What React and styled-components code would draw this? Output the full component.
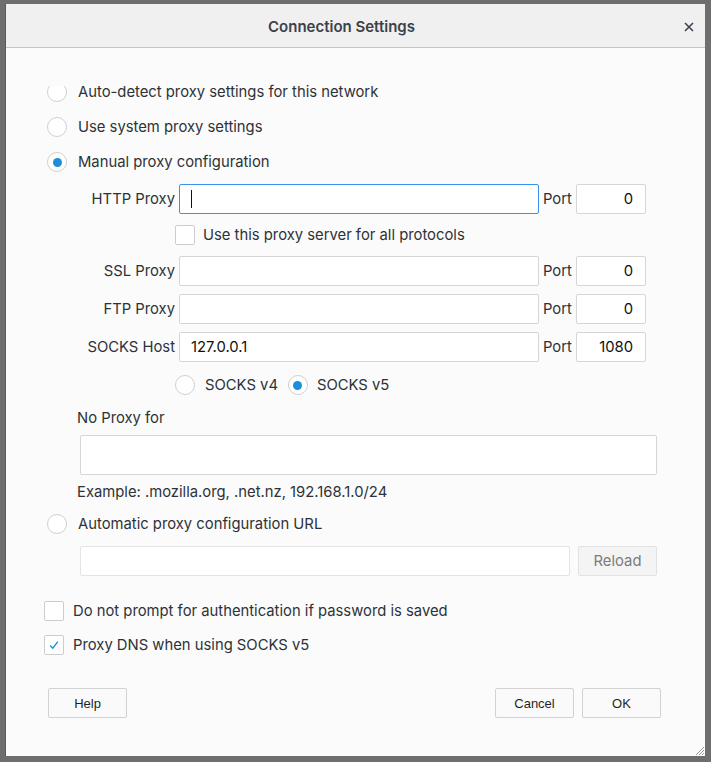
import React from 'react';
import styled, { createGlobalStyle } from 'styled-components';

const GlobalStyle = createGlobalStyle`
  html, body {
    margin: 0;
    padding: 0;
    background: #6e6e6e;
  }
  body {
    font-family: Inter, "Noto Sans", sans-serif;
  }
  * { box-sizing: border-box; }
`;

const Page = styled.div`
  width: 711px;
  height: 762px;
  padding: 4px 0 0 5px;
`;

const Dialog = styled.div`
  position: relative;
  width: 700px;
  height: 752px;
  background: #fbfbfb;
  border-left: 1px solid #5a5a5a;
  display: flex;
  flex-direction: column;
`;

const Header = styled.div`
  height: 44px;
  flex: none;
  background: #f0f0f0;
  border-bottom: 1px solid #c6c6c6;
  display: flex;
  align-items: center;
  justify-content: center;
  padding-right: 28px;
  position: relative;
`;

const Title = styled.div`
  font-size: 15px;
  font-weight: 600;
  color: #3b4149;
  margin-top: 1px;
`;

const CloseBtn = styled.button`
  position: absolute;
  right: 9px;
  top: 16px;
  width: 14px;
  height: 14px;
  padding: 0;
  border: none;
  background: transparent;
  display: flex;
  align-items: center;
  justify-content: center;
`;

const Body = styled.div`
  flex: 1;
  padding-top: 34px;
  padding-left: 41px;
  display: flex;
  flex-direction: column;
  color: #2d3237;
  font-size: 14.8px;
`;

const OptionRow = styled.label`
  display: flex;
  align-items: center;
  height: 20px;
  margin-top: ${(p) => p.$mt || 0}px;
  margin-left: ${(p) => p.$ml || 0}px;
  gap: ${(p) => p.$gap || 11}px;
  white-space: nowrap;
`;

const RadioCircle = styled.span`
  width: 20px;
  height: 20px;
  flex: none;
  border-radius: 50%;
  border: 1px solid #cfcfcf;
  background: #ffffff;
  display: flex;
  align-items: center;
  justify-content: center;
  clip-path: ${(p) => (p.$cut ? 'inset(4px 0 0 0)' : 'none')};
  &::after {
    content: '';
    width: 9px;
    height: 9px;
    border-radius: 50%;
    background: ${(p) => (p.$on ? '#1b8fdc' : 'transparent')};
  }
`;

const CheckBox = styled.span`
  width: 20px;
  height: 20px;
  flex: none;
  border: 1px solid #cdcdcd;
  border-radius: 2px;
  background: #ffffff;
  display: flex;
  align-items: center;
  justify-content: center;
`;

const SocksGroup = styled.div`
  display: flex;
  align-items: center;
  gap: 10px;
  margin-top: 13px;
  margin-left: 128px;
`;

const ProxyRow = styled.div`
  display: flex;
  align-items: center;
  height: 30px;
  margin-top: ${(p) => p.$mt}px;
  gap: 4px;
`;

const FieldLabel = styled.span`
  width: ${(p) => p.$w}px;
  flex: none;
  text-align: ${(p) => p.$align || 'right'};
  white-space: nowrap;
`;

const FieldWrap = styled.div`
  position: relative;
  width: ${(p) => p.$w}px;
  height: 30px;
  flex: none;
`;

const TextInput = styled.input`
  width: 100%;
  height: 100%;
  border: 1px solid ${(p) => (p.$focus ? '#3b92ee' : p.$disabled ? '#e4e4e4' : '#d6d6d6')};
  border-radius: 2px;
  background: #ffffff;
  padding: 0 ${(p) => (p.$right ? 12 : 11)}px;
  text-align: ${(p) => (p.$right ? 'right' : 'left')};
  font-family: Inter, "Noto Sans", sans-serif;
  font-size: 14.8px;
  color: #111;
  outline: none;
  caret-color: transparent;
`;

const Caret = styled.span`
  position: absolute;
  left: 12px;
  top: 6px;
  width: 1px;
  height: 18px;
  background: #111;
`;

const Plain = styled.div`
  margin-top: ${(p) => p.$mt}px;
  margin-left: 30px;
  height: 18px;
  line-height: 18px;
`;

const Area = styled.textarea`
  margin-top: 8px;
  margin-left: 33px;
  width: 577px;
  height: 40px;
  border: 1px solid #d6d6d6;
  border-radius: 2px;
  background: #fff;
  resize: none;
  outline: none;
`;

const UrlRow = styled.div`
  display: flex;
  gap: 8px;
  margin-top: 12px;
  margin-left: 33px;
  height: 30px;
`;

const ReloadBtn = styled.button`
  width: 79px;
  height: 30px;
  border: 1px solid #e2e2e2;
  border-radius: 2px;
  background: #f4f4f4;
  color: #7b7b7b;
  font-family: Inter, "Noto Sans", sans-serif;
  font-size: 14.8px;
  padding: 0;
`;

const Footer = styled.div`
  display: flex;
  justify-content: space-between;
  margin-top: 33px;
  margin-left: -41px;
  padding: 0 44px 0 42px;
`;

const BtnGroup = styled.div`
  display: flex;
  gap: 8px;
`;

const DlgButton = styled.button`
  width: 79px;
  height: 30px;
  border: 1px solid #d2d2d2;
  border-radius: 2px;
  background: #fafafa;
  color: #1f1f1f;
  font-family: "Liberation Sans", Arial, sans-serif;
  font-size: 13px;
  padding: 0;
`;

const Grip = styled.svg`
  position: absolute;
  right: 0;
  bottom: 0;
`;

const Radio = ({ on, cut, children, mt, ml, gap }) => (
  <OptionRow $mt={mt} $ml={ml} $gap={gap}>
    <RadioCircle $on={on} $cut={cut} />
    <span>{children}</span>
  </OptionRow>
);

const Check = ({ on, children, mt, ml, gap }) => (
  <OptionRow $mt={mt} $ml={ml} $gap={gap}>
    <CheckBox>
      {on && (
        <svg width="12" height="12" viewBox="0 0 12 12">
          <path d="M2.2 6.4 L4.8 9.2 L9.8 2.6" fill="none" stroke="#1b8fdc" strokeWidth="1.4" />
        </svg>
      )}
    </CheckBox>
    <span>{children}</span>
  </OptionRow>
);

const Proxy = ({ label, value, port, mt, focus }) => (
  <ProxyRow $mt={mt}>
    <FieldLabel $w={128}>{label}</FieldLabel>
    <FieldWrap $w={360}>
      <TextInput $focus={focus} defaultValue={value} />
      {focus && <Caret />}
    </FieldWrap>
    <FieldLabel $w={29} $align="left">Port</FieldLabel>
    <FieldWrap $w={70}>
      <TextInput $right defaultValue={port} />
    </FieldWrap>
  </ProxyRow>
);

export default function App() {
  return (
    <>
      <GlobalStyle />
      <Page>
        <Dialog>
          <Header>
            <Title>Connection Settings</Title>
            <CloseBtn>
              <svg width="10" height="10" viewBox="0 0 10 10">
                <path d="M1 1 L9 9 M9 1 L1 9" stroke="#3b4450" strokeWidth="1.6" />
              </svg>
            </CloseBtn>
          </Header>
          <Body>
            <Radio cut>Auto-detect proxy settings for this network</Radio>
            <Radio mt={15}>Use system proxy settings</Radio>
            <Radio mt={15} on>Manual proxy configuration</Radio>
            <Proxy label="HTTP Proxy" value="" port="0" mt={12} focus />
            <Check mt={11} ml={128} gap={8}>Use this proxy server for all protocols</Check>
            <Proxy label="SSL Proxy" value="" port="0" mt={11} />
            <Proxy label="FTP Proxy" value="" port="0" mt={8} />
            <Proxy label="SOCKS Host" value="127.0.0.1" port="1080" mt={8} />
            <SocksGroup>
              <Radio gap={10}>SOCKS v4</Radio>
              <Radio gap={9} on>SOCKS v5</Radio>
            </SocksGroup>
            <Plain $mt={14}>No Proxy for</Plain>
            <Area />
            <Plain $mt={8}>Example: .mozilla.org, .net.nz, 192.168.1.0/24</Plain>
            <Radio mt={13}>Automatic proxy configuration URL</Radio>
            <UrlRow>
              <FieldWrap $w={490}>
                <TextInput $disabled disabled />
              </FieldWrap>
              <ReloadBtn>Reload</ReloadBtn>
            </UrlRow>
            <Check mt={25} ml={-3} gap={9}>Do not prompt for authentication if password is saved</Check>
            <Check mt={14} ml={-3} gap={9} on>Proxy DNS when using SOCKS v5</Check>
            <Footer>
              <DlgButton>Help</DlgButton>
              <BtnGroup>
                <DlgButton>Cancel</DlgButton>
                <DlgButton>OK</DlgButton>
              </BtnGroup>
            </Footer>
          </Body>
          <Grip width="12" height="12" viewBox="0 0 12 12">
            <path d="M11 3 L3 11 M11 6 L6 11 M11 9 L9 11" stroke="#9a9a9a" strokeWidth="1" />
          </Grip>
        </Dialog>
      </Page>
    </>
  );
}
